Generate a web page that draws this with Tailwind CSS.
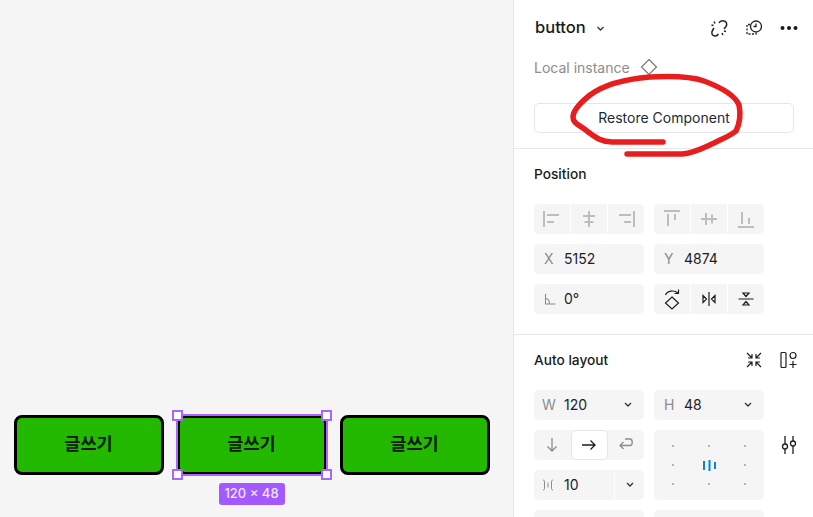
<!DOCTYPE html>
<html>
<head>
<meta charset="utf-8">
<script src="https://cdn.jsdelivr.net/npm/@tailwindcss/browser@4"></script>
</head>
<body class="overflow-hidden">
<div class="relative flex h-[517px] w-[813px] overflow-hidden bg-white font-['Inter','Noto_Sans_CJK_KR',sans-serif] text-[13px] text-[#1e1e1e]">
  <!-- canvas -->
  <main class="relative h-full w-[513px] shrink-0 bg-[#f5f5f5] pt-[414.500px] pl-[13.500px]">
    <div class="flex gap-[13px]">
      <button class="flex h-[60px] w-[150px] items-center justify-center rounded-[8px] border-[3px] border-black bg-[#22b900] text-[17.500px] font-bold text-[#0a1a05]">글쓰기</button>
      <button class="relative flex h-[60px] w-[150px] items-center justify-center rounded-[8px] border-[3px] border-black bg-[#22b900] text-[17.500px] font-bold text-[#0a1a05]">글쓰기
        <span class="absolute -inset-[4px] border-2 border-[#a866ff]"></span>
        <span class="absolute -top-[8px] -left-[8px] size-[11px] border-2 border-[#a866ff] bg-white"></span>
        <span class="absolute -top-[8px] -right-[8px] size-[11px] border-2 border-[#a866ff] bg-white"></span>
        <span class="absolute -bottom-[8px] -left-[8px] size-[11px] border-2 border-[#a866ff] bg-white"></span>
        <span class="absolute -bottom-[8px] -right-[8px] size-[11px] border-2 border-[#a866ff] bg-white"></span>
        <span class="absolute top-[65px] left-[39px] flex h-[22px] w-[66px] items-center justify-center rounded-[3px] bg-[#a259ff] text-[13px] font-medium text-[#f0e4ff]">120 × 48</span>
      </button>
      <button class="flex h-[60px] w-[150px] items-center justify-center rounded-[8px] border-[3px] border-black bg-[#22b900] text-[17.500px] font-bold text-[#0a1a05]">글쓰기</button>
    </div>
  </main>

  <!-- panel -->
  <aside class="h-full w-[300px] shrink-0 border-l border-[#e6e6e6] bg-white">
    <section class="h-[148px] px-5 pt-[16px]">
      <div class="flex h-[22px] items-center">
        <span class="ml-[1px] text-[16.500px] font-medium leading-[22px] text-[#1a1a1a]">button</span>
        <svg class="ml-[10px] mt-[2px]" width="9" height="7" viewBox="0 0 9 7" fill="none" stroke="#333" stroke-width="1.300"><path d="M1.500 2l3 3 3-3"/></svg>
        <div class="ml-auto mt-[2px] flex items-center gap-[15px] -mr-[6px]">
          <svg width="20" height="20" viewBox="0 0 20 20" fill="none" stroke="#222" stroke-width="1.500"><path d="M10 5C11 3 13 2.500 15 3c2.500.500 3.500 3 2 5.500L15 11M5 10l-1.500 2.500C2 15 3 17.500 5.500 18c1.500.300 3-.500 4-2M5 3.500l1 2M2.500 7l2 .500M13 15l1 2M15 13l2 .500"/></svg>
          <svg width="20" height="20" viewBox="0 0 20 20" fill="none" stroke="#222" stroke-width="1.300"><circle cx="12" cy="8.500" r="5.500"/><path d="M12 5.500v3H9.500"/><path d="M6 6.500H3v9.500h9v-2.500" stroke-dasharray="2 1.500"/></svg>
          <svg width="20" height="20" viewBox="0 0 20 20" fill="#1a1a1a"><circle cx="3.500" cy="10" r="2"/><circle cx="10" cy="10" r="2"/><circle cx="16.500" cy="10" r="2"/></svg>
        </div>
      </div>
      <div class="mt-[18px] flex h-[22px] items-center">
        <span class="text-[14px] text-[#8c8c8c]">Local instance</span>
        <svg class="ml-[10px]" width="18" height="18" viewBox="0 0 18 18" fill="none" stroke="#777" stroke-width="1.200"><path d="M9 1.500L16.500 9 9 16.500 1.500 9z"/></svg>
      </div>
      <button class="mt-[25px] flex h-[30px] w-[260px] items-center justify-center rounded-[5px] border border-[#e6e6e6] pb-[1px] text-[14px] text-[#1e2a38]">Restore Component</button>
    </section>

    <section class="h-[186px] border-t border-[#e6e6e6] px-5 pt-[15px]">
      <h2 class="text-[13.700px] font-medium leading-[20px] text-[#1a1a1a]">Position</h2>
      <div class="mt-[20px] grid w-[230px] grid-cols-2 gap-x-[10px] gap-y-[10px]">
        <div class="flex h-[30px] overflow-hidden rounded-[5px] bg-[#f5f5f5] divide-x divide-white">
          <div class="flex flex-1 items-center justify-center"><svg width="18" height="18" viewBox="0 0 18 18" fill="none" stroke="#bdbdbd" stroke-width="2"><path d="M1 1v16M4 5h12M4 12h7"/></svg></div>
          <div class="flex flex-1 items-center justify-center"><svg width="14" height="18" viewBox="0 0 14 18" fill="none" stroke="#bdbdbd" stroke-width="2"><path d="M7 1v16M1 6h12M2.500 12h9"/></svg></div>
          <div class="flex flex-1 items-center justify-center"><svg width="18" height="18" viewBox="0 0 18 18" fill="none" stroke="#bdbdbd" stroke-width="2"><path d="M17 1v16M2 5h12M7 12h7"/></svg></div>
        </div>
        <div class="flex h-[30px] overflow-hidden rounded-[5px] bg-[#f5f5f5] divide-x divide-white">
          <div class="flex flex-1 items-center justify-center"><svg width="18" height="18" viewBox="0 0 18 18" fill="none" stroke="#bdbdbd" stroke-width="2"><path d="M1 1h16M5 4v12M12 4v6"/></svg></div>
          <div class="flex flex-1 items-center justify-center"><svg width="16" height="14" viewBox="0 0 16 14" fill="none" stroke="#bdbdbd" stroke-width="2"><path d="M0 7h16M5 1v12M11 2.500v9"/></svg></div>
          <div class="flex flex-1 items-center justify-center"><svg width="18" height="18" viewBox="0 0 18 18" fill="none" stroke="#bdbdbd" stroke-width="2"><path d="M1 17h16M5 2v12M12 8v6"/></svg></div>
        </div>
        <div class="flex h-[30px] items-center rounded-[5px] bg-[#f5f5f5] pb-[1px] pl-[10px] text-[14px]"><span class="w-[20px] text-[#8c8c8c]">X</span><span>5152</span></div>
        <div class="flex h-[30px] items-center rounded-[5px] bg-[#f5f5f5] pb-[1px] pl-[10px] text-[14px]"><span class="w-[20px] text-[#8c8c8c]">Y</span><span>4874</span></div>
        <div class="flex h-[30px] items-center rounded-[5px] bg-[#f5f5f5] pb-[1px] pl-[10px] text-[14px]">
          <span class="w-[20px]"><svg width="12" height="12" viewBox="0 0 12 12" fill="none" stroke="#8c8c8c" stroke-width="1.100"><path d="M1.500 1v10h10M1.500 5.500c2.500 0 4 1.800 4 5.500"/></svg></span><span>0°</span>
        </div>
        <div class="flex h-[30px] overflow-hidden rounded-[5px] bg-[#f5f5f5] divide-x divide-white">
          <div class="flex flex-1 items-center justify-center"><svg width="18" height="22" viewBox="0 0 18 22" fill="none" stroke="#1e1e1e" stroke-width="1.200"><path d="M9 9l6.500 6L9 21l-6.500-6zM2.500 7C4 3 11 1.500 15 5M15.500 1.500V5.500H11.500"/></svg></div>
          <div class="flex flex-1 items-center justify-center"><svg width="18" height="16" viewBox="0 0 18 16" fill="none" stroke="#1e1e1e" stroke-width="1.200"><path d="M9 1v14M3 4.500L6.500 8 3 11.500zM15 4.500L11.500 8l3.500 3.500z"/></svg></div>
          <div class="flex flex-1 items-center justify-center"><svg width="16" height="18" viewBox="0 0 16 18" fill="none" stroke="#1e1e1e" stroke-width="1.200"><path d="M0.500 9h15M5 3l3 3.500L11 3zM5 15l3-3.500 3 3.500z"/></svg></div>
        </div>
      </div>
    </section>

    <section class="border-t border-[#e6e6e6] px-5 pt-[15px]">
      <div class="flex h-[20px] items-center">
        <h2 class="text-[13.700px] font-medium leading-[20px] text-[#1a1a1a]">Auto layout</h2>
        <div class="ml-auto flex items-center gap-[17px] -mr-[5px]">
          <svg width="18" height="18" viewBox="0 0 18 18" fill="none" stroke="#1e1e1e" stroke-width="1.200"><path d="M2 2l5 5M7 3v4H3M16 2l-5 5M11 3v4h4M2 16l5-5M7 15v-4H3M16 16l-5-5M11 15v-4h4"/></svg>
          <svg width="18" height="18" viewBox="0 0 18 18" fill="none" stroke="#1e1e1e" stroke-width="1.200"><rect x="1" y="1.500" width="5" height="15" rx="1"/><circle cx="13" cy="4.500" r="3"/><path d="M13 10v7M9.500 13.500h7"/></svg>
        </div>
      </div>
      <div class="relative mt-[20px] grid w-[230px] grid-cols-2 gap-x-[10px] gap-y-[10px]">
        <div class="flex h-[30px] items-center rounded-[5px] bg-[#f5f5f5] pb-[1px] pl-[8px] text-[14px]"><span class="w-[22px] text-[#8c8c8c]">W</span><span>120</span><svg class="ml-auto mr-[12px]" width="8" height="6" viewBox="0 0 8 6" fill="none" stroke="#333" stroke-width="1.300"><path d="M1 1l3 3 3-3"/></svg></div>
        <div class="flex h-[30px] items-center rounded-[5px] bg-[#f5f5f5] pb-[1px] pl-[10px] text-[14px]"><span class="w-[20px] text-[#8c8c8c]">H</span><span>48</span><svg class="ml-auto mr-[12px]" width="8" height="6" viewBox="0 0 8 6" fill="none" stroke="#333" stroke-width="1.300"><path d="M1 1l3 3 3-3"/></svg></div>
        <div class="flex h-[30px] items-center justify-between rounded-[5px] bg-[#f5f5f5]">
          <div class="flex w-[36px] justify-center"><svg width="14" height="16" viewBox="0 0 14 16" fill="none" stroke="#8c8c8c" stroke-width="1.300"><path d="M7 1v13M2.500 9.500L7 14l4.500-4.500"/></svg></div>
          <div class="flex h-[30px] w-[37px] items-center justify-center rounded-[5px] border border-[#e6e6e6] bg-white"><svg width="16" height="12" viewBox="0 0 16 12" fill="none" stroke="#1e1e1e" stroke-width="1.300"><path d="M1 6h13M9.500 1.500L14 6l-4.500 4.500"/></svg></div>
          <div class="flex w-[36px] justify-center"><svg width="16" height="14" viewBox="0 0 16 14" fill="none" stroke="#8c8c8c" stroke-width="1.300"><path d="M7 1h5c3 0 3 6.500 0 6.500H2M5.500 4L2 7.500 5.500 11"/></svg></div>
        </div>
        <div class="row-span-2 grid h-[70px] grid-cols-3 grid-rows-3 place-items-center rounded-[5px] bg-[#f5f5f5] px-[1px] py-[6.500px]">
          <i class="size-[2px] bg-[#b3b3b3]"></i><i class="size-[2px] bg-[#b3b3b3]"></i><i class="size-[2px] bg-[#b3b3b3]"></i>
          <i class="size-[2px] bg-[#b3b3b3]"></i>
          <svg width="13" height="11" viewBox="0 0 13 11" fill="#0d80e6"><rect x="0" y="1" width="2" height="9"/><rect x="5.500" y="0" width="2" height="11"/><rect x="11" y="2" width="2" height="7"/></svg>
          <i class="size-[2px] bg-[#b3b3b3]"></i>
          <i class="size-[2px] bg-[#b3b3b3]"></i><i class="size-[2px] bg-[#b3b3b3]"></i><i class="size-[2px] bg-[#b3b3b3]"></i>
        </div>
        <div class="flex h-[30px] items-center rounded-[5px] bg-[#f5f5f5] pb-[1px] pl-[8px] text-[14px]">
          <span class="w-[22px]"><svg width="12" height="12" viewBox="0 0 12 12" fill="none" stroke="#8c8c8c" stroke-width="1"><path d="M1 1c1.500 0 1.500 1 1.500 2v6c0 1 0 2-1.500 2M11 1C9.500 1 9.500 2 9.500 3v6c0 1 0 2 1.500 2M6 3.500v5"/></svg></span><span>10</span>
          <div class="ml-auto -mb-[1px] flex h-[30px] w-[30px] items-center justify-center border-l border-white"><svg width="8" height="6" viewBox="0 0 8 6" fill="none" stroke="#333" stroke-width="1.300"><path d="M1 1l3 3 3-3"/></svg></div>
        </div>
        <div class="h-[30px] rounded-[5px] bg-[#f5f5f5]"></div>
        <div class="h-[30px] rounded-[5px] bg-[#f5f5f5]"></div>
        <svg class="absolute top-[45px] left-[245px]" width="20" height="20" viewBox="0 0 20 20" fill="none" stroke="#1e1e1e" stroke-width="1.300"><path d="M6 1v8M6 14v5M14 1v5M14 11v8"/><circle cx="6" cy="11.500" r="2.500"/><circle cx="14" cy="8.500" r="2.500"/></svg>
      </div>
    </section>
  </aside>

  <!-- hand-drawn annotation over the panel -->
  <svg class="pointer-events-none absolute top-0 left-0" width="813" height="517" viewBox="0 0 813 517" fill="none" stroke="#e81e1e" stroke-width="5.500" stroke-linecap="round" stroke-linejoin="round"><path d="M663 142 L612 142 C600 142 594 136 587 131 C580 125 573 124 573 117 C573 110 580 103 590 95 C605 84 625 79 650 77 C670 76 690 76 704 81 C720 87 735 95 739 105 C741 115 739 125 736 131 C730 136 722 139 714 143 C705 147 695 153 682 154 L627 154"/></svg>
</div>
</body>
</html>
